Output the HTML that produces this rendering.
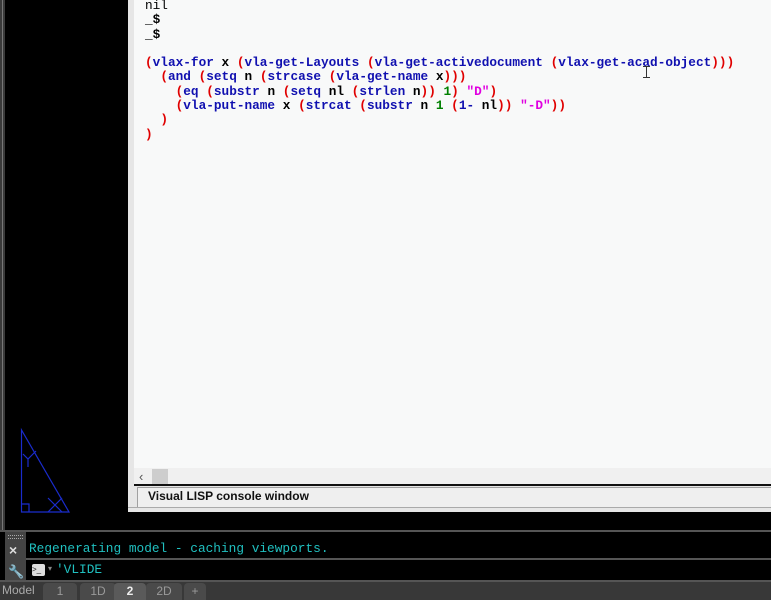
<!DOCTYPE html>
<html><head><meta charset="utf-8"><style>
*{margin:0;padding:0;box-sizing:border-box}
body{width:771px;height:600px;background:#000;position:relative;overflow:hidden;font-family:"Liberation Sans",sans-serif}
.abs{position:absolute}
pre{font-family:"Liberation Mono",monospace;font-size:12.75px;line-height:14.3px;font-weight:bold;color:#000}
.r{color:#e00000}.b{color:#1010b0}.g{color:#008000}.m{color:#e000e0}
.tab{position:absolute;top:583px;height:17px;color:#9a9a9a;font-size:12px;text-align:center;line-height:16px;background:#4a4a4a;border-radius:4px 4px 0 0}
</style></head><body>
<div class="abs" style="left:0;top:0;width:5px;height:530px;background:#3a3a3a"></div>
<div class="abs" style="left:2px;top:0;width:1px;height:530px;background:#777"></div>
<svg class="abs" style="left:0;top:420px" width="130" height="100">
<g stroke="#1a2ccc" stroke-width="1.2" fill="none">
<path d="M21.5 10 V92 H69 Z"/><path d="M21.5 84 H29 V92"/>
<path d="M23 34 L28 39 L36 31 M28 39 V47"/>
<path d="M48 78 L62 92 M48 92 L62 78"/>
</g></svg>
<div class="abs" style="left:128px;top:0;width:643px;height:512px;background:#e6e6e6"></div>
<div class="abs" style="left:134px;top:0;width:637px;height:468px;background:#f8f9f9"></div>
<pre class="abs" style="left:145px;top:-1px"><span style="font-weight:normal">nil</span>
_$
_$

<span class="r">(</span><span class="b">vlax-for</span> x <span class="r">(</span><span class="b">vla-get-Layouts</span> <span class="r">(</span><span class="b">vla-get-activedocument</span> <span class="r">(</span><span class="b">vlax-get-acad-object</span><span class="r">)))</span>
  <span class="r">(</span><span class="b">and</span> <span class="r">(</span><span class="b">setq</span> n <span class="r">(</span><span class="b">strcase</span> <span class="r">(</span><span class="b">vla-get-name</span> x<span class="r">)))</span>
    <span class="r">(</span><span class="b">eq</span> <span class="r">(</span><span class="b">substr</span> n <span class="r">(</span><span class="b">setq</span> nl <span class="r">(</span><span class="b">strlen</span> n<span class="r">))</span> <span class="g">1</span><span class="r">)</span> <span class="m">"D"</span><span class="r">)</span>
    <span class="r">(</span><span class="b">vla-put-name</span> x <span class="r">(</span><span class="b">strcat</span> <span class="r">(</span><span class="b">substr</span> n <span class="g">1</span> <span class="r">(</span><span class="b">1-</span> nl<span class="r">))</span> <span class="m">"-D"</span><span class="r">))</span>
  <span class="r">)</span>
<span class="r">)</span></pre>
<div class="abs" style="left:646px;top:66px;width:1px;height:11px;background:#333"></div>
<div class="abs" style="left:643px;top:66px;width:7px;height:1px;background:#333"></div>
<div class="abs" style="left:643px;top:77px;width:7px;height:1px;background:#333"></div>
<div class="abs" style="left:134px;top:468px;width:637px;height:17px;background:#f0f0f0"></div>
<div class="abs" style="left:139px;top:468px;font-size:13px;color:#555;line-height:17px">&lsaquo;</div>
<div class="abs" style="left:152px;top:469px;width:16px;height:15px;background:#cdcdcd"></div>
<div class="abs" style="left:134px;top:484px;width:637px;height:2px;background:#111"></div>
<div class="abs" style="left:137px;top:487px;width:634px;height:20px;background:#efefef;border-top:1px solid #a0a0a0;border-left:1px solid #a0a0a0"></div>
<div class="abs" style="left:148px;top:488px;font-size:12px;font-weight:bold;color:#111;line-height:16px">Visual LISP console window</div>
<div class="abs" style="left:128px;top:507px;width:643px;height:1px;background:#aaa"></div>
<div class="abs" style="left:0;top:530px;width:771px;height:2px;background:#555"></div>
<div class="abs" style="left:5px;top:532px;width:21px;height:50px;background:#444"></div>
<div class="abs" style="left:8px;top:535px;width:15px;height:4px;border-top:1px dotted #aaa;border-bottom:1px dotted #aaa"></div>
<div class="abs" style="left:9px;top:542px;color:#ddd;font-size:14px;font-weight:bold">×</div>
<div class="abs" style="left:8px;top:564px;color:#ddd;font-size:13px">🔧</div>
<div class="abs" style="left:26px;top:558px;width:745px;height:2px;background:#555"></div>
<div class="abs" style="left:0;top:580px;width:771px;height:2px;background:#555"></div>
<pre class="abs" style="left:29px;top:542px;color:#20c0c0;font-weight:normal;font-size:12.8px">Regenerating model - caching viewports.</pre>
<div class="abs" style="left:32px;top:564px;width:13px;height:12px;background:#ddd;border-radius:2px;font-size:8px;color:#222;line-height:12px">&gt;_</div>
<div class="abs" style="left:48px;top:564px;color:#888;font-size:8px">▾</div>
<pre class="abs" style="left:56px;top:563px;color:#20c0c0;font-weight:normal;font-size:12.8px">'VLIDE</pre>
<div class="abs" style="left:0;top:582px;width:771px;height:18px;background:#383838"></div>
<div class="abs" style="left:2px;top:583px;color:#aaa;font-size:12px">Model</div>
<div class="tab" style="left:43px;width:34px">1</div>
<div class="tab" style="left:80px;width:36px">1D</div>
<div class="tab" style="left:114px;width:32px;background:#5a5a5a;color:#eee;font-weight:bold">2</div>
<div class="tab" style="left:146px;width:36px">2D</div>
<div class="tab" style="left:184px;width:22px">+</div>
</body></html>
